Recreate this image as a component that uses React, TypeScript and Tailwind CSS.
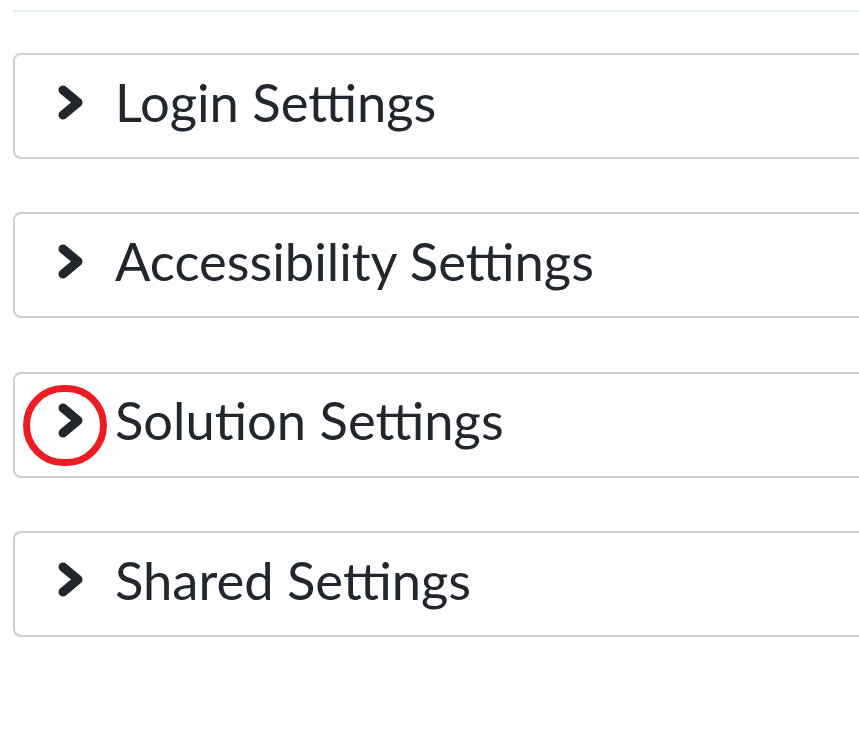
import React from "react";

const Chevron = () => (
  <svg width="25" height="35" viewBox="0 0 25 35" className="shrink-0">
    <path
      d="M5 5 L20 17.5 L5 30"
      fill="none"
      stroke="#22262d"
      strokeWidth="9"
      strokeLinecap="round"
      strokeLinejoin="round"
    />
  </svg>
);

const Row = ({ label, marked }: { label: string; marked?: boolean }) => (
  <div className="relative h-[106px] -mr-[20px] rounded-[8px] border-2 border-[#cfd0d1] bg-white flex items-center pl-[43px] pb-[8px]">
    <Chevron />
    <span className="ml-[32px] text-[52.5px] leading-none text-[#22262d] whitespace-nowrap" style={{ fontFamily: "Lato, 'Noto Sans', sans-serif" }}>
      {label}
    </span>
    {marked && (
      <div className="absolute left-[8px] top-[11px] w-[84px] h-[81px] rounded-full border-[7px] border-[#ec1c24]" />
    )}
  </div>
);

export default function App() {
  return (
    <div className="w-[859px] h-[756px] overflow-hidden bg-white pl-[13px] pt-[10px]">
      <div className="h-[2px] bg-[#e3f3f5]" />
      <div className="mt-[41px] flex flex-col gap-[53.3px]">
        <Row label="Login Settings" />
        <Row label="Accessibility Settings" />
        <Row label="Solution Settings" marked />
        <Row label="Shared Settings" />
      </div>
    </div>
  );
}
